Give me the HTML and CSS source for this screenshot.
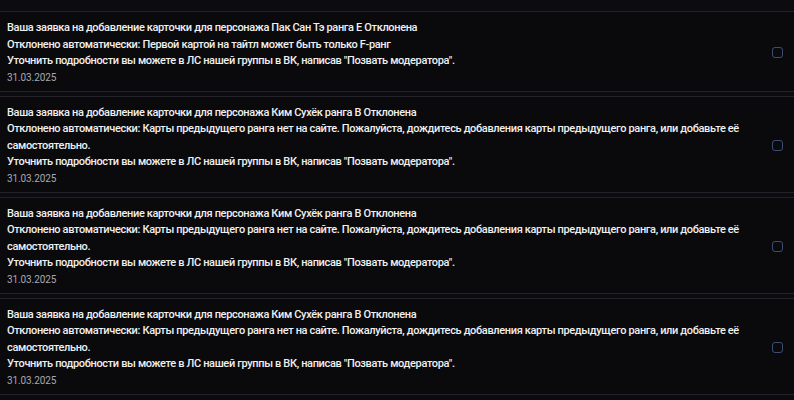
FILE: index.html
```html
<!DOCTYPE html>
<html lang="ru">

<head>
    <meta charset="UTF-8">
    <title>Уведомления</title>
    <link rel="stylesheet" href="styles.css">
</head>

<body>
    <div class="list">
        <div class="notice">
            <div class="notice-text">
                <p>Ваша заявка на добавление карточки для персонажа Пак Сан Тэ ранга E Отклонена</p>
                <p>Отклонено автоматически: Первой картой на тайтл может быть только F-ранг</p>
                <p>Уточнить подробности вы можете в ЛС нашей группы в ВК, написав "Позвать модератора".</p>
                <span class="date">31.03.2025</span>
            </div>
            <span class="check"></span>
        </div>
        <div class="notice">
            <div class="notice-text">
                <p>Ваша заявка на добавление карточки для персонажа Ким Сухёк ранга B Отклонена</p>
                <p>Отклонено автоматически: Карты предыдущего ранга нет на сайте. Пожалуйста, дождитесь добавления карты предыдущего ранга, или добавьте её самостоятельно.</p>
                <p>Уточнить подробности вы можете в ЛС нашей группы в ВК, написав "Позвать модератора".</p>
                <span class="date">31.03.2025</span>
            </div>
            <span class="check"></span>
        </div>
        <div class="notice">
            <div class="notice-text">
                <p>Ваша заявка на добавление карточки для персонажа Ким Сухёк ранга B Отклонена</p>
                <p>Отклонено автоматически: Карты предыдущего ранга нет на сайте. Пожалуйста, дождитесь добавления карты предыдущего ранга, или добавьте её самостоятельно.</p>
                <p>Уточнить подробности вы можете в ЛС нашей группы в ВК, написав "Позвать модератора".</p>
                <span class="date">31.03.2025</span>
            </div>
            <span class="check"></span>
        </div>
        <div class="notice">
            <div class="notice-text">
                <p>Ваша заявка на добавление карточки для персонажа Ким Сухёк ранга B Отклонена</p>
                <p>Отклонено автоматически: Карты предыдущего ранга нет на сайте. Пожалуйста, дождитесь добавления карты предыдущего ранга, или добавьте её самостоятельно.</p>
                <p>Уточнить подробности вы можете в ЛС нашей группы в ВК, написав "Позвать модератора".</p>
                <span class="date">31.03.2025</span>
            </div>
            <span class="check"></span>
        </div>
    </div>
</body>

</html>
```

FILE: styles.css
```css
body {
    margin: 0;
    background-color: #0c0c10;
    color: #f0f0f0;
    font-family: Roboto, "Noto Sans", sans-serif;
    font-size: 11px;
    font-weight: 500;
    letter-spacing: -0.35px;
}

.list {
    padding-top: 11px;
    display: flex;
    flex-direction: column;
    gap: 4px;
}

.notice {
    display: flex;
    align-items: center;
    background-color: #0a0a0d;
    border-top: 1px solid #222228;
    border-bottom: 1px solid #222228;
    padding: 8px 11px 6px 7px;
}

.notice-text {
    flex: 1;
    padding-right: 20px;
}

.notice-text p {
    margin: 0;
    line-height: 16.5px;
}

.date {
    display: block;
    color: #a8a8ae;
    font-size: 10px;
    font-weight: 400;
    line-height: 15px;
    letter-spacing: -0.1px;
}

.check {
    width: 9px;
    height: 9px;
    border: 1.5px solid #3d4e72;
    border-radius: 3px;
}
```
